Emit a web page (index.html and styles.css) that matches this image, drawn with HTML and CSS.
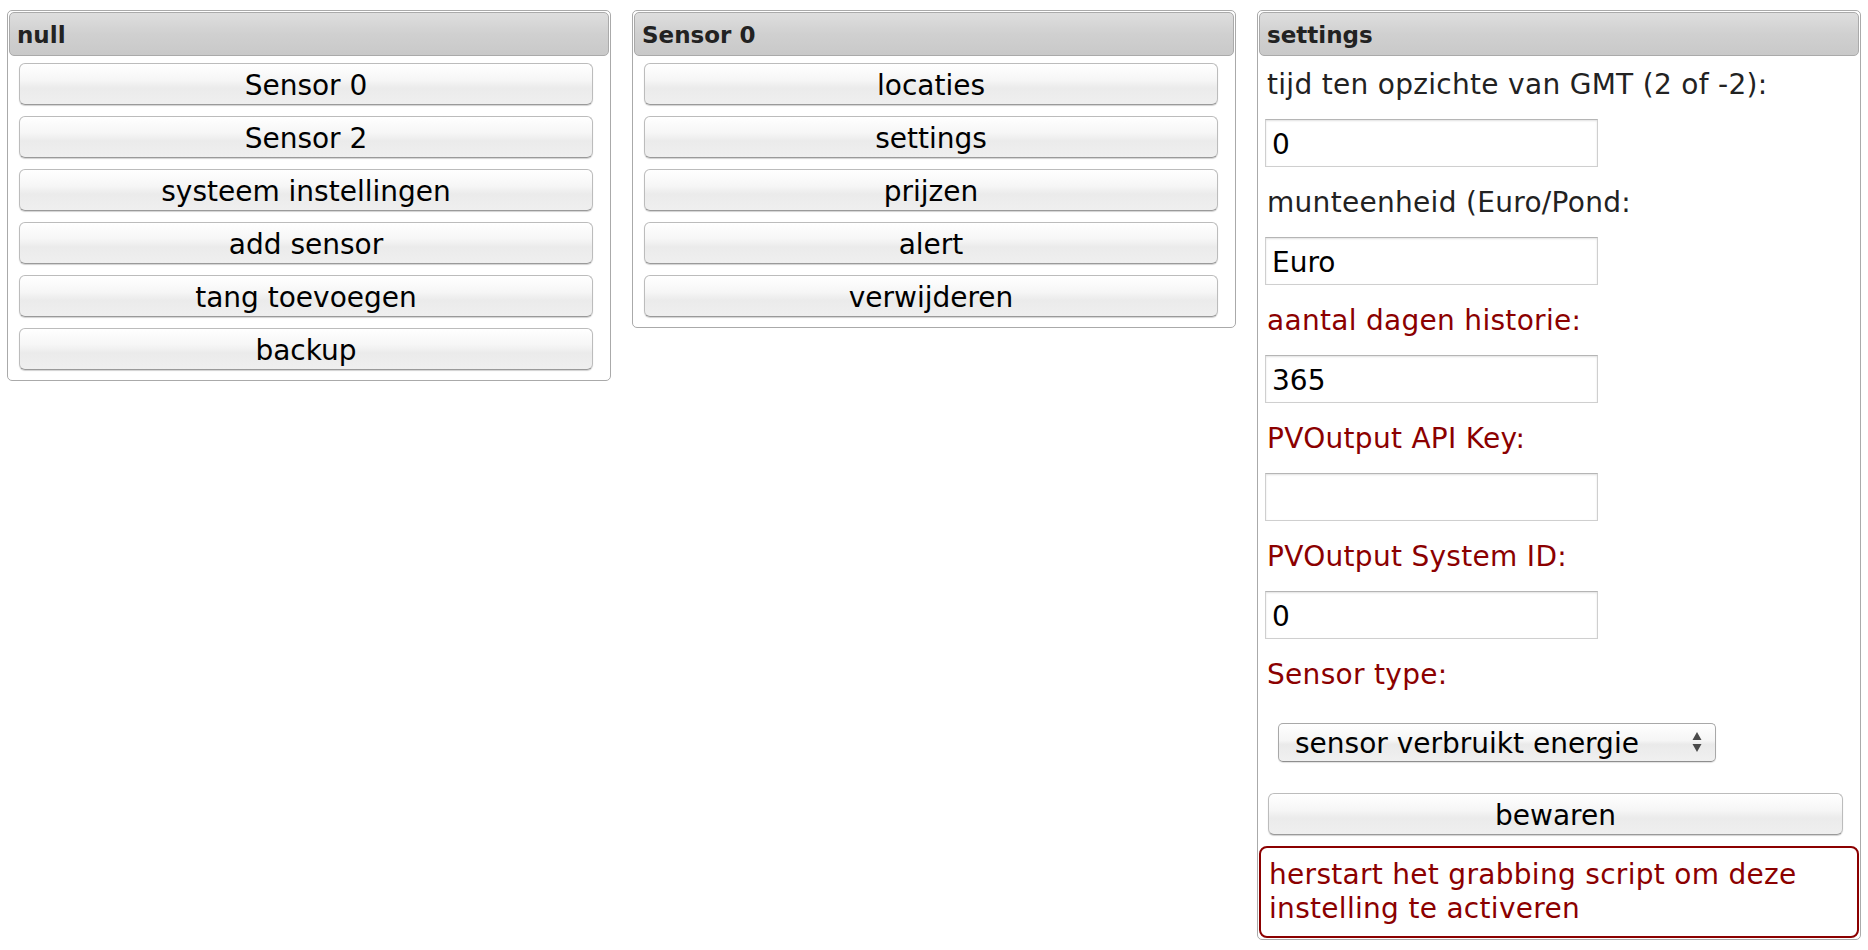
FILE: index.html
```html
<!DOCTYPE html>
<html lang="nl">
<head>
<meta charset="utf-8">
<title>Instellingen</title>
<link rel="stylesheet" href="styles.css">
</head>
<body>
<div class="page">
  <section class="panel">
    <h2 class="panel-header">null</h2>
    <div class="menu">
      <button class="btn">Sensor 0</button>
      <button class="btn">Sensor 2</button>
      <button class="btn">systeem instellingen</button>
      <button class="btn">add sensor</button>
      <button class="btn">tang toevoegen</button>
      <button class="btn">backup</button>
    </div>
  </section>

  <section class="panel">
    <h2 class="panel-header">Sensor 0</h2>
    <div class="menu">
      <button class="btn">locaties</button>
      <button class="btn">settings</button>
      <button class="btn">prijzen</button>
      <button class="btn">alert</button>
      <button class="btn">verwijderen</button>
    </div>
  </section>

  <section class="panel">
    <h2 class="panel-header">settings</h2>
    <form class="settings">
      <label class="field-label first">tijd ten opzichte van GMT (2 of -2):</label>
      <input class="text-input" type="text" value="0">
      <label class="field-label">munteenheid (Euro/Pond:</label>
      <input class="text-input" type="text" value="Euro">
      <label class="field-label warn">aantal dagen historie:</label>
      <input class="text-input" type="text" value="365">
      <label class="field-label warn">PVOutput API Key:</label>
      <input class="text-input" type="text" value="">
      <label class="field-label warn">PVOutput System ID:</label>
      <input class="text-input" type="text" value="0">
      <label class="field-label warn">Sensor type:</label>
      <div class="select-wrap">
        <select class="select">
          <option>sensor verbruikt energie</option>
        </select>
        <svg class="select-arrows" width="12" height="24" viewBox="0 0 12 24" aria-hidden="true">
          <path d="M6 2 L10.5 10 L1.5 10 Z" fill="#4a4a4a"/>
          <path d="M1.5 14 L10.5 14 L6 22 Z" fill="#4a4a4a"/>
        </svg>
      </div>
      <button class="btn save" type="button">bewaren</button>
      <div class="notice">herstart het grabbing script om deze instelling te activeren</div>
    </form>
  </section>
</div>
</body>
</html>
```

FILE: styles.css
```css
html, body {
  background: #fff;
}

body {
  margin: 0;
  padding: 10px 7px;
  font-family: "DejaVu Sans", Verdana, sans-serif;
  color: #222;
}

.page {
  display: flex;
  align-items: flex-start;
  gap: 21px;
}

.panel {
  flex: 1 1 0;
  min-width: 0;
  border: 1px solid #aaa;
  border-radius: 5px;
  padding: 1px;
  background: #fff;
}

.panel-header {
  margin: 0;
  padding: 8px 7px 6px;
  font-size: 23px;
  line-height: 28px;
  font-weight: bold;
  color: #222;
  border: 1px solid #aaa;
  border-radius: 5px;
  background: linear-gradient(to bottom, #dedede 0%, #d0d0d0 50%, #c9c9c9 100%);
}

.menu {
  display: flex;
  flex-direction: column;
  gap: 11px;
  padding: 7px 0 9px;
}

.btn {
  display: block;
  box-sizing: border-box;
  height: 42px;
  margin: 0 16px 0 10px;
  padding: 4px 0 0;
  font-family: inherit;
  font-size: 28px;
  line-height: 36px;
  color: #000;
  text-align: center;
  border: 1px solid #bcbcbc;
  border-bottom-color: #9a9a9a;
  border-radius: 6px;
  background: linear-gradient(to bottom, #ffffff 0%, #f6f6f6 40%, #ebebeb 60%, #efefef 100%);
  box-shadow: 0 1px 1px rgba(0, 0, 0, 0.18);
  cursor: pointer;
}

.settings {
  display: flex;
  flex-direction: column;
  align-items: flex-start;
  margin: 0;
}

.field-label {
  display: block;
  margin: 19px 0 17px 8px;
  font-size: 28px;
  line-height: 34px;
  letter-spacing: 0.3px;
  color: #222;
}

.field-label.first {
  margin-top: 12px;
}

.field-label.warn {
  color: #8b0000;
}

.text-input {
  box-sizing: border-box;
  width: 333px;
  height: 48px;
  margin: 0 0 0 6px;
  padding: 2px 6px 0;
  font-family: inherit;
  font-size: 28px;
  color: #000;
  background: #fff;
  border: 1px solid #cfcfcf;
  border-top-color: #b5b5b5;
  box-shadow: inset 0 1px 2px rgba(0, 0, 0, 0.12);
  outline: none;
}

.select-wrap {
  position: relative;
  margin: 14px 0 0 19px;
}

.select {
  box-sizing: border-box;
  display: block;
  width: 438px;
  height: 39px;
  margin: 0;
  padding: 2px 40px 0 16px;
  font-family: inherit;
  font-size: 28px;
  color: #000;
  -webkit-appearance: none;
  appearance: none;
  border: 1px solid #a8a8a8;
  border-bottom-color: #8e8e8e;
  border-radius: 5px;
  background: linear-gradient(to bottom, #ffffff 0%, #f5f5f5 45%, #eaeaea 55%, #f0f0f0 100%);
  box-shadow: 0 1px 1px rgba(0, 0, 0, 0.12);
}

.select-arrows {
  position: absolute;
  right: 13px;
  top: 7px;
}

.btn.save {
  align-self: stretch;
  margin: 31px 16px 0 9px;
}

.notice {
  align-self: stretch;
  margin-top: 11px;
  padding: 10px 8px;
  font-size: 28px;
  line-height: 34px;
  letter-spacing: 0.3px;
  color: #8b0000;
  border: 2px solid #8b0000;
  border-radius: 8px;
}
```
